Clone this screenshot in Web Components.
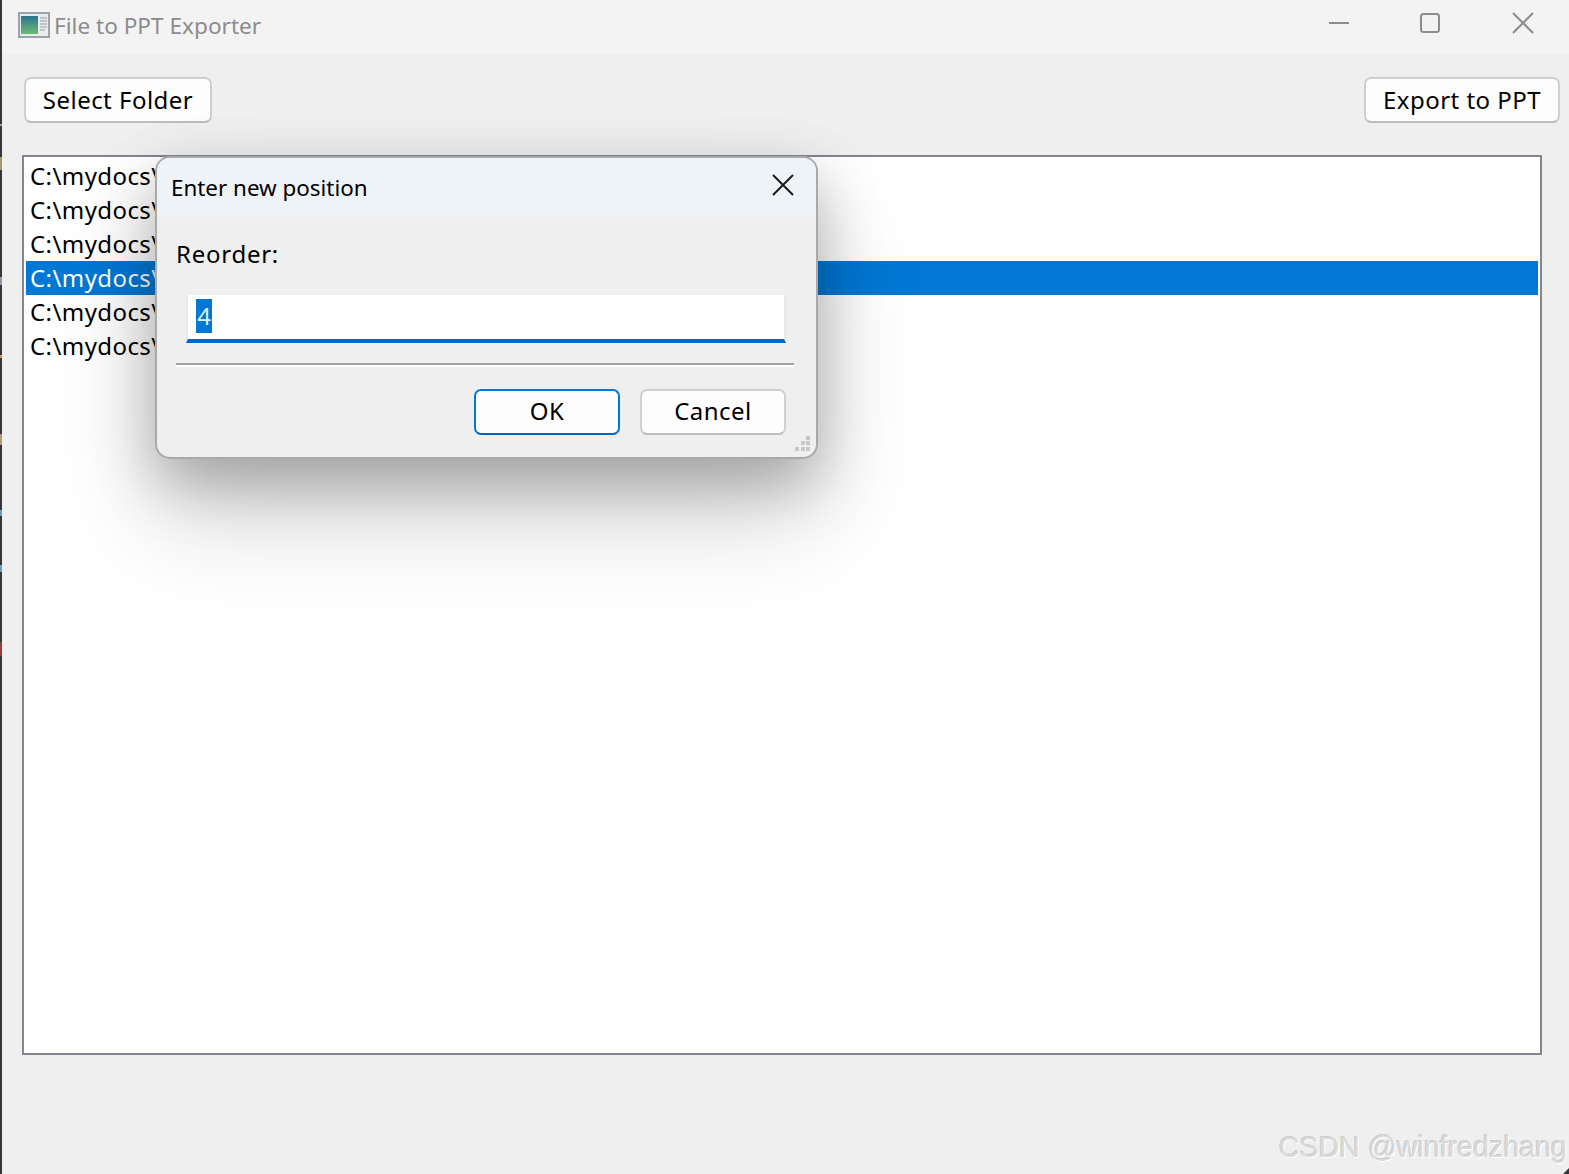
<!DOCTYPE html>
<html>
<head>
<meta charset="utf-8">
<title>File to PPT Exporter</title>
<style>
  html,body{margin:0;height:100%;background:#efefef;overflow:hidden}
  body{font-family:"Noto Sans",sans-serif;color:#000}
</style>
</head>
<body>
<app-window></app-window>

<template id="t-btn">
  <style>
    :host{display:inline-flex;box-sizing:border-box;height:46px;align-items:center;justify-content:center;
      background:#fdfdfd;border:2px solid #cfcfcf;border-bottom-color:#bdbdbd;border-radius:7px;font-size:24px;line-height:1;letter-spacing:.47px}
    :host([primary]){border-color:#0078d4;border-bottom-color:#0067c0}
  </style>
  <slot></slot>
</template>

<template id="t-title">
  <style>
    :host{display:flex;align-items:center;height:54px;background:#f3f3f3;flex:none;color:#8c8c8c;font-size:22.6px}
    .name{margin-left:4px;margin-top:-3px;flex:1}
    svg{display:block;margin-left:16px;margin-top:-4px;flex:none}
    .ctl{display:flex;flex:none}
    .ctl svg{margin:-8px 0 0 0;stroke:#8c8c8c;fill:none;stroke-width:2}
  </style>
  <svg width="32" height="26" viewBox="0 0 32 26">
    <rect x="1" y="1" width="30" height="24" fill="#e8ecef" stroke="#9aa3ab" stroke-width="2"/>
    <defs><linearGradient id="g" x1="0" y1="0" x2="0" y2="1"><stop offset="0" stop-color="#2a7490"/><stop offset="1" stop-color="#6dbb6d"/></linearGradient></defs>
    <rect x="3" y="4" width="17" height="18" fill="url(#g)"/>
    <path d="M22 6h7M22 9h7M22 12h7M22 15h7M22 18h5" stroke="#aeb6ba" stroke-width="1.5"/>
  </svg>
  <span class="name"><slot></slot></span>
  <div class="ctl">
    <svg width="22" height="22" viewBox="0 0 22 22" style="margin-right:69px"><path d="M1 11H21"/></svg>
    <svg width="22" height="22" viewBox="0 0 22 22" style="margin-right:71px"><rect x="2" y="2" width="18" height="18" rx="2.5"/></svg>
    <svg width="22" height="22" viewBox="0 0 22 22" style="margin-right:35px"><path d="M1 1L21 21M21 1L1 21"/></svg>
  </div>
</template>

<template id="t-list">
  <style>
    :host{display:block;box-sizing:border-box;border:2px solid #84868f;background:#fff;padding:2px;flex:none;font-size:24px;overflow:hidden}
  </style>
  <slot></slot>
</template>

<template id="t-item">
  <style>
    :host{display:block;height:34px;line-height:34px;padding-left:4px;white-space:nowrap;letter-spacing:.42px}
    :host([selected]){background:#0078d4;color:#fff}
  </style>
  <slot></slot>
</template>

<template id="t-dialog">
  <style>
    :host{position:absolute;left:155px;top:156px;width:663px;height:303px;box-sizing:border-box;
      display:flex;flex-direction:column;background:#efefef;border:2px solid #a9a9a9;border-radius:15px;
      box-shadow:0 24px 60px rgba(0,0,0,.26),0 58px 104px rgba(0,0,0,.17);font-size:24px}
    .head{display:flex;align-items:center;justify-content:space-between;height:59px;flex:none;
      background:#eef3f8;border-radius:13px 13px 0 0;padding:0 22px 0 14px;font-size:22.4px}
    .head svg{stroke:#1a1a1a;fill:none;stroke-width:2;display:block;margin-top:-5px}
    .body{flex:1;display:flex;flex-direction:column;padding:0 22px 0 19px;position:relative}
    label{display:block;margin-top:19px;line-height:36px;height:36px;letter-spacing:.75px}
    .field{margin:23px 8px 0 10px;height:48px;box-sizing:border-box;background:#fff;border:2px solid #e9e9e9;border-top:0;border-bottom:4px solid #0067c0;
      padding:4px 0 0 8px;line-height:34px;display:flex}
    .field b{font-weight:400;background:#0078d4;color:#dfefff;height:34px;width:16px;text-align:center;display:block}
    hr{margin:20px 0 0;height:2px;border:0;background:#a0a0a0;box-shadow:0 2px 0 #fff}
    .foot{display:flex;justify-content:flex-end;gap:20px;margin-top:24px;padding-right:8px}
    .foot x-button{width:146px;padding-bottom:2px}
    .grip{position:absolute;right:5px;bottom:5px;display:block;fill:#c8c8c8}
  </style>
  <div class="head">
    <span><slot name="title"></slot></span>
    <svg width="22" height="22" viewBox="0 0 22 22"><path d="M1 1L21 21M21 1L1 21"/></svg>
  </div>
  <div class="body">
    <label>Reorder:</label>
    <div class="field"><b>4</b></div>
    <hr>
    <div class="foot">
      <x-button primary>OK</x-button>
      <x-button>Cancel</x-button>
    </div>
    <svg class="grip" width="16" height="16" viewBox="0 0 16 16">
      <rect x="11" y="0" width="4" height="4"/>
      <rect x="6" y="5" width="4" height="4"/><rect x="11" y="5" width="4" height="4"/>
      <rect x="0" y="11" width="4" height="4"/><rect x="6" y="11" width="4" height="4"/><rect x="11" y="11" width="4" height="4"/>
    </svg>
  </div>
</template>

<template id="t-app">
  <style>
    :host{display:flex;flex-direction:column;position:relative;width:1569px;height:1174px;box-sizing:border-box;
      padding-left:2px;background:#efefef;overflow:hidden}
    /* what shows of the desktop behind the window */
    .strip{position:absolute;left:0;top:0;bottom:0;width:2px;
      background:linear-gradient(#35363a 0 124px,#b49a70 124px 126px,#35363a 126px 157px,#a8946e 157px 170px,
        #35363a 170px 277px,#8d99a5 277px 285px,#35363a 285px 355px,#c09a62 355px 358px,#35363a 358px 434px,
        #b09a76 434px 445px,#35363a 445px 510px,#6d9bc4 510px 516px,#35363a 516px 565px,#6d9bc4 565px 572px,
        #35363a 572px 642px,#9c3a3a 642px 656px,#35363a 656px)}
    .corner{position:absolute;right:0;bottom:0;display:block;fill:#35363a}
    .bar{display:flex;justify-content:space-between;padding:23px 9px 0 23px;flex:none;height:101px;box-sizing:border-box}
    .bar x-button:first-child{width:188px;margin-left:-1px}
    .bar x-button:last-child{width:196px}
    x-list{margin-left:20px;width:1520px;height:900px}
    .mark{position:absolute;right:2px;bottom:10px;font:28.6px "Liberation Sans",sans-serif;color:#dadada;
      text-shadow:1px 1px 0 #fff,-1px -1px 0 #cbcbcb}
  </style>
  <div class="strip"></div>
  <x-title>File to PPT Exporter</x-title>
  <div class="bar">
    <x-button>Select Folder</x-button>
    <x-button>Export to PPT</x-button>
  </div>
  <x-list>
    <x-item>C:\mydocs\</x-item>
    <x-item>C:\mydocs\</x-item>
    <x-item>C:\mydocs\</x-item>
    <x-item selected>C:\mydocs\</x-item>
    <x-item>C:\mydocs\</x-item>
    <x-item>C:\mydocs\</x-item>
  </x-list>
  <x-dialog><span slot="title">Enter new position</span></x-dialog>
  <div class="mark">CSDN @winfredzhang</div>
  <svg class="corner" width="6" height="6" viewBox="0 0 6 6"><path d="M6 0V6H0Z"/></svg>
</template>

<script>
// all elements share the same shape, only the template differs
function makeEl(tag, tplId){
  customElements.define(tag, class extends HTMLElement {
    constructor(){
      super();
      this.attachShadow({mode:'open'});
      this.shadowRoot.appendChild(document.getElementById(tplId).content.cloneNode(true));
    }
  });
}
makeEl('x-button','t-btn');
makeEl('x-title','t-title');
makeEl('x-list','t-list');
makeEl('x-item','t-item');
makeEl('x-dialog','t-dialog');
makeEl('app-window','t-app');
</script>
</body>
</html>
